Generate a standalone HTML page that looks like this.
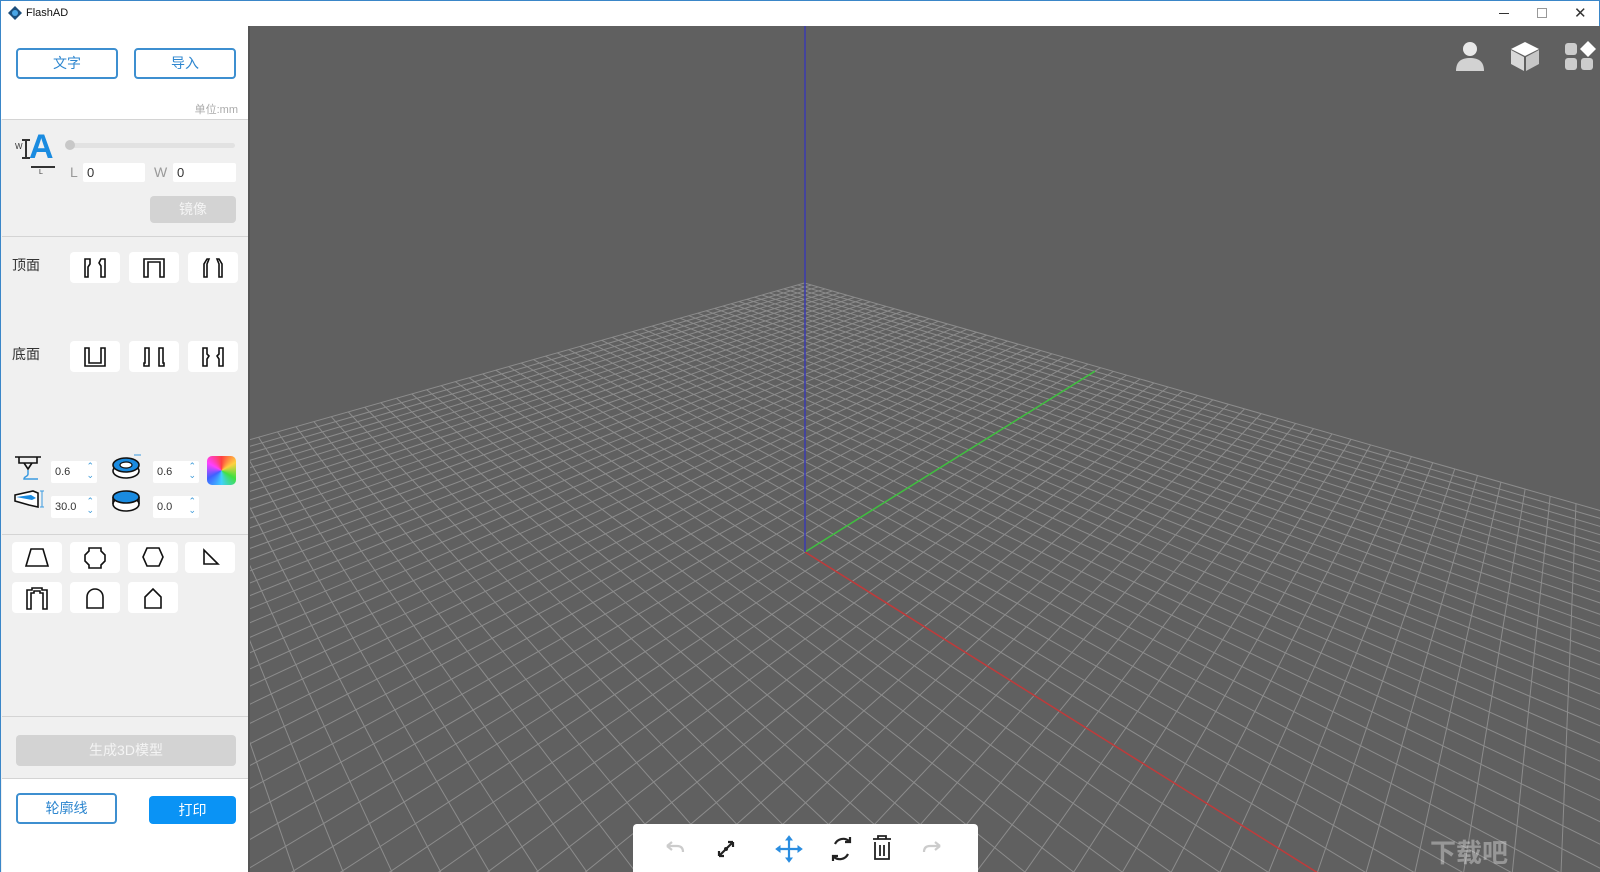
<!DOCTYPE html>
<html><head><meta charset="utf-8">
<style>
*{box-sizing:border-box;margin:0;padding:0}
html{width:1600px;height:872px;overflow:hidden}
body{width:1600px;height:872px;overflow:hidden;position:relative;background:#fff;font-family:"Liberation Sans","Noto Sans CJK SC",sans-serif}
.abs{position:absolute}
#title{left:0;top:0;width:1600px;height:26px;background:#fff;border-left:1px solid #3a86c8;border-right:1px solid #3a86c8;border-top:1px solid #3a86c8}
#panel{left:0;top:26px;width:250px;height:846px;background:#f0f0f0;border-left:1px solid #3a86c8;border-right:2px solid #555;overflow:hidden}
.btn{position:absolute;border:2px solid #3d8fd0;border-radius:4px;color:#2d86cf;font-size:14px;text-align:center;background:#fff}
.gbtn{position:absolute;background:#d3d3d3;border-radius:4px;color:#f4f4f4;font-size:14px;text-align:center}
.div{position:absolute;left:1px;width:247px;height:1px;background:#d4d4d4}
.ib{position:absolute;width:50px;height:31px;background:#fff;border-radius:4px}
.ib svg{position:absolute;left:0;top:0}
.lbl{position:absolute;font-size:14px;color:#333}
.inp{position:absolute;background:#fff;border-radius:2px;font-size:11px;color:#333;padding-left:4px;line-height:22px;overflow:hidden}
.spin{position:absolute;right:3px;top:1px;color:#3d9ad8;font-size:9px;line-height:9px}
#view{left:250px;top:26px;width:1350px;height:846px;background:#606060;overflow:hidden}
</style></head><body>
<div id="title" class="abs">
<svg class="abs" style="left:7px;top:5px" width="14" height="14" viewBox="0 0 14 14"><path d="M7 0L14 7L7 14L0 7Z" fill="#1d4f7c"/><circle cx="7" cy="7" r="3" fill="#4aa6e6"/></svg>
<span class="abs" style="left:25px;top:6px;font-size:11px;color:#111">FlashAD</span>
<div class="abs" style="left:1498px;top:12px;width:10px;height:1px;background:#333"></div>
<div class="abs" style="left:1536px;top:7px;width:10px;height:10px;border:1px solid #999"></div>
<span class="abs" style="left:1573px;top:3px;font-size:15px;color:#333">✕</span>
</div>
<div id="panel" class="abs">
<div class="abs" style="left:0;top:0;width:247px;height:93px;background:#fff"></div>
<div class="btn" style="left:15px;top:22px;width:102px;height:31px;line-height:27px">文字</div>
<div class="btn" style="left:133px;top:22px;width:102px;height:31px;line-height:27px">导入</div>
<div class="abs" style="right:10px;top:75px;font-size:11px;color:#aaa">单位:mm</div>
<div class="div" style="top:93px"></div>
<div class="abs" style="left:14px;top:116px;font-size:8px;color:#333">W</div>
<div class="abs" style="left:24px;top:113px;width:2px;height:20px;background:#333"></div>
<div class="abs" style="left:21px;top:113px;width:8px;height:2px;background:#333"></div>
<div class="abs" style="left:21px;top:131px;width:8px;height:2px;background:#333"></div>
<div class="abs" style="left:28px;top:104px;font-size:34px;font-weight:bold;color:#1a8be0;line-height:34px">A</div>
<div class="abs" style="left:30px;top:140px;width:24px;height:2px;background:#333"></div>
<div class="abs" style="left:38px;top:143px;font-size:7px;color:#333">L</div>
<div class="abs" style="left:67px;top:117px;width:167px;height:5px;background:#e2e2e2;border-radius:3px"></div>
<div class="abs" style="left:64px;top:114px;width:10px;height:10px;background:#c8c8c8;border-radius:50%"></div>
<div class="abs" style="left:69px;top:138px;font-size:14px;color:#999">L</div>
<div class="inp" style="left:82px;top:137px;width:62px;height:19px;font-size:13px;line-height:19px">0</div>
<div class="abs" style="left:153px;top:138px;font-size:14px;color:#999">W</div>
<div class="inp" style="left:172px;top:137px;width:63px;height:19px;font-size:13px;line-height:20px">0</div>
<div class="gbtn" style="left:149px;top:170px;width:86px;height:27px;line-height:27px">镜像</div>
<div class="div" style="top:210px"></div>
<div class="lbl" style="left:11px;top:229px">顶面</div>
<div class="ib" style="left:69px;top:226px"><svg width="50" height="31"><path d="M15 7h5v5l-2 3v10h-3zM35 7h-4l-2 4 2 3v11h4z" fill="none" stroke="#111" stroke-width="1.6"/></svg></div>
<div class="ib" style="left:128px;top:226px"><svg width="50" height="31"><path d="M15 25V7h20v18h-4V10h-12v15z" fill="none" stroke="#111" stroke-width="1.6"/></svg></div>
<div class="ib" style="left:187px;top:226px"><svg width="50" height="31"><path d="M16 25V12l3-5h2l-2 5v13zM34 25V12l-3-5h-2l2 5v13z" fill="none" stroke="#111" stroke-width="1.6"/></svg></div>
<div class="lbl" style="left:11px;top:318px">底面</div>
<div class="ib" style="left:69px;top:315px"><svg width="50" height="31"><path d="M15 7v18h20V7h-4v15h-12V7z" fill="none" stroke="#111" stroke-width="1.6"/></svg></div>
<div class="ib" style="left:128px;top:315px"><svg width="50" height="31"><path d="M16 7h4v18h-5v-3h1zM30 7v18h5v-3h-1V7z" fill="none" stroke="#111" stroke-width="1.6"/></svg></div>
<div class="ib" style="left:187px;top:315px"><svg width="50" height="31"><path d="M15 7v18h4V18l2-3-2-2V7zM35 7v18h-4V18l-2-3 2-2V7z" fill="none" stroke="#111" stroke-width="1.6"/></svg></div>
<svg class="abs" style="left:13px;top:428px" width="30" height="28"><path d="M1 3h26M5 3v6h18V3M10 9l4 6 4-6" fill="none" stroke="#111" stroke-width="1.6"/><path d="M14 16v4c0 3-4 2-4 5h14" fill="none" stroke="#3a9ae0" stroke-width="1.5"/></svg>
<div class="inp" style="left:50px;top:435px;width:46px;height:22px">0.6<div class="spin">⌃<br>⌄</div></div>
<svg class="abs" style="left:111px;top:426px" width="32" height="30"><ellipse cx="14" cy="19" rx="13" ry="7" fill="#fff" stroke="#111" stroke-width="1.6"/><ellipse cx="14" cy="13" rx="13" ry="7" fill="#1a8be0" stroke="#111" stroke-width="1.6"/><ellipse cx="14" cy="13" rx="6" ry="3" fill="#fff" stroke="#111" stroke-width="1.2"/><path d="M22 3h7" stroke="#3a9ae0"/></svg>
<div class="inp" style="left:152px;top:435px;width:46px;height:22px">0.6<div class="spin">⌃<br>⌄</div></div>
<div class="abs" style="left:206px;top:430px;width:29px;height:29px;border-radius:5px;background:conic-gradient(#ff4040,#ffd040,#40e040,#40d0ff,#4060ff,#ff40ff,#ff4040)"></div>
<svg class="abs" style="left:12px;top:461px" width="32" height="26"><path d="M2 8l18-4 5 2v14l-9-2-14-4z" fill="#fff" stroke="#111" stroke-width="1.6"/><path d="M3 10l15-2 5 3-4 2z" fill="#1a8be0"/><path d="M29 4v16M27 4h4M27 20h4" stroke="#3a9ae0"/></svg>
<div class="inp" style="left:50px;top:470px;width:46px;height:22px">30.0<div class="spin">⌃<br>⌄</div></div>
<svg class="abs" style="left:111px;top:462px" width="32" height="26"><ellipse cx="14" cy="16" rx="13" ry="7" fill="#fff" stroke="#111" stroke-width="1.6"/><path d="M1 9v7M27 9v7" stroke="#111" stroke-width="1.6"/><ellipse cx="14" cy="9" rx="13" ry="6" fill="#1a8be0" stroke="#111" stroke-width="1.6"/></svg>
<div class="inp" style="left:152px;top:470px;width:46px;height:22px">0.0<div class="spin">⌃<br>⌄</div></div>
<div class="div" style="top:508px"></div>
<div class="ib" style="left:11px;top:516px"><svg width="50" height="31"><path d="M19 7h12l5 17H14z" fill="none" stroke="#111" stroke-width="1.6"/></svg></div>
<div class="ib" style="left:69px;top:516px"><svg width="50" height="31"><path d="M19 6h12v3l4 4v6l-4 4v3H19v-3l-4-4v-6l4-4z" fill="none" stroke="#111" stroke-width="1.6"/></svg></div>
<div class="ib" style="left:127px;top:516px"><svg width="50" height="31"><path d="M19 6h12l4 9-4 9H19l-4-9z" fill="none" stroke="#111" stroke-width="1.6"/></svg></div>
<div class="ib" style="left:184px;top:516px"><svg width="50" height="31"><path d="M19 8v14h14z" fill="none" stroke="#111" stroke-width="1.6"/></svg></div>
<div class="ib" style="left:11px;top:556px"><svg width="50" height="31"><path d="M15 27V8h5v-2h10v2h5v19h-4V11h-3V9h-6v2h-3v16z" fill="none" stroke="#111" stroke-width="1.6"/></svg></div>
<div class="ib" style="left:69px;top:556px"><svg width="50" height="31"><path d="M17 26V15a8 8 0 0 1 16 0v11z" fill="none" stroke="#111" stroke-width="1.6"/></svg></div>
<div class="ib" style="left:127px;top:556px"><svg width="50" height="31"><path d="M17 26V15l8-8 8 8v11z" fill="none" stroke="#111" stroke-width="1.6"/></svg></div>
<div class="div" style="top:690px"></div>
<div class="gbtn" style="left:15px;top:709px;width:220px;height:31px;line-height:31px">生成3D模型</div>
<div class="abs" style="left:1px;top:752px;width:247px;height:94px;background:#fff;border-top:1px solid #d4d4d4"></div>
<div class="btn" style="left:15px;top:767px;width:101px;height:31px;line-height:27px">轮廓线</div>
<div class="abs" style="left:148px;top:770px;width:87px;height:28px;line-height:28px;background:#0a93f5;border-radius:4px;color:#fff;font-size:14px;text-align:center">打印</div>
</div>
<div id="view" class="abs">
<svg id="g" width="1350" height="846" viewBox="250 26 1350 846" style="position:absolute;left:0;top:0"></svg>
<svg class="abs" style="left:1204px;top:14px" width="32" height="32"><circle cx="16" cy="9" r="7" fill="#e8e8e8"/><path d="M2 31c0-10 6-13 14-13s14 3 14 13z" fill="#d2d2d2"/></svg>
<svg class="abs" style="left:1259px;top:14px" width="32" height="32"><path d="M16 2l14 7-14 7-14-7z" fill="#fff"/><path d="M2 10l13 7v14L2 24z" fill="#d8d8d8"/><path d="M30 10l-13 7v14l13-7z" fill="#c6c6c6"/></svg>
<svg class="abs" style="left:1314px;top:14px" width="32" height="32"><rect x="1" y="3" width="12" height="12" rx="3" fill="#ccc"/><path d="M24 1l8 8-8 8-8-8z" fill="#fff"/><rect x="1" y="18" width="12" height="12" rx="3" fill="#ccc"/><rect x="17" y="18" width="12" height="12" rx="3" fill="#ccc"/></svg>
<div class="abs" style="left:383px;top:798px;width:345px;height:48px;background:#fff;border-radius:4px 4px 0 0">
<svg class="abs" style="left:0;top:0" width="345" height="48" fill="none" stroke-width="2.2">
<path d="M34 22h10c4 0 6 2 6 6M34 22l5-4M34 22l5 4" stroke="#ccc"/>
<path d="M86 32l14-14M86 32v-5M86 32h5M100 18h-5M100 18v5" stroke="#222"/><circle cx="93" cy="25" r="2" fill="#222"/>
<path d="M146 25h20M156 15v20" stroke="#2a8de0"/><path d="M143 25l4-3v6zM169 25l-4-3v6zM156 12l-3 4h6zM156 38l-3-4h6z" fill="#2a8de0" stroke="#2a8de0" stroke-width="1"/>
<path d="M202 20a9 9 0 0 1 14-3M215 30a9 9 0 0 1-14 3M217 13v5h-5M200 37v-5h5" stroke="#222"/>
<path d="M240 15h18M245 15v-3h8v3M242 18v17h14V18M247 21v11M251 21v11" stroke="#222" stroke-width="1.8"/>
<path d="M307 22h-10c-4 0-6 2-6 6M307 22l-5-4M307 22l-5 4" stroke="#ccc"/>
</svg></div>
<div class="abs" style="left:1180px;top:812px;font-size:26px;line-height:30px;color:rgba(255,255,255,0.35);font-weight:bold">下载吧</div>
</div>
<script>
(function(){
var s=document.getElementById('g'),c=0.599,VR=[14,57],VG=[1594,60],O=[805,552];
function P(x,y){var a=-c*x,b=c*y,w=1+a+b;return[(a*VR[0]+b*VG[0]+O[0])/w,(a*VR[1]+b*VG[1]+O[1])/w];}
var N=32,h='',e=0.03;
for(var i=-N;i<=N;i++){var t=i/N;
 var y0=Math.max(-1,(e-1+c*t)/c);
 if(y0<1){var p=P(t,y0),q=P(t,1);h+='<line x1="'+p[0]+'" y1="'+p[1]+'" x2="'+q[0]+'" y2="'+q[1]+'"/>';}
 var x1=Math.min(1,(1+c*t-e)/c);
 if(x1>-1){var p=P(-1,t),q=P(x1,t);h+='<line x1="'+p[0]+'" y1="'+p[1]+'" x2="'+q[0]+'" y2="'+q[1]+'"/>';}
}
var g='<g stroke="#8c8c8c" stroke-width="1">'+h+'</g>';
var ge=P(0,0.97),re=P(0.99,0);
g+='<line x1="805" y1="552" x2="'+ge[0]+'" y2="'+ge[1]+'" stroke="#3fc03f" stroke-width="1.5"/>';
g+='<line x1="805" y1="552" x2="'+re[0]+'" y2="'+re[1]+'" stroke="#c03a3a" stroke-width="1.5"/>';
g+='<line x1="805" y1="552" x2="805" y2="26" stroke="#3a3ab0" stroke-width="1.5"/>';
s.innerHTML=g;
})();
</script>
</body></html>
